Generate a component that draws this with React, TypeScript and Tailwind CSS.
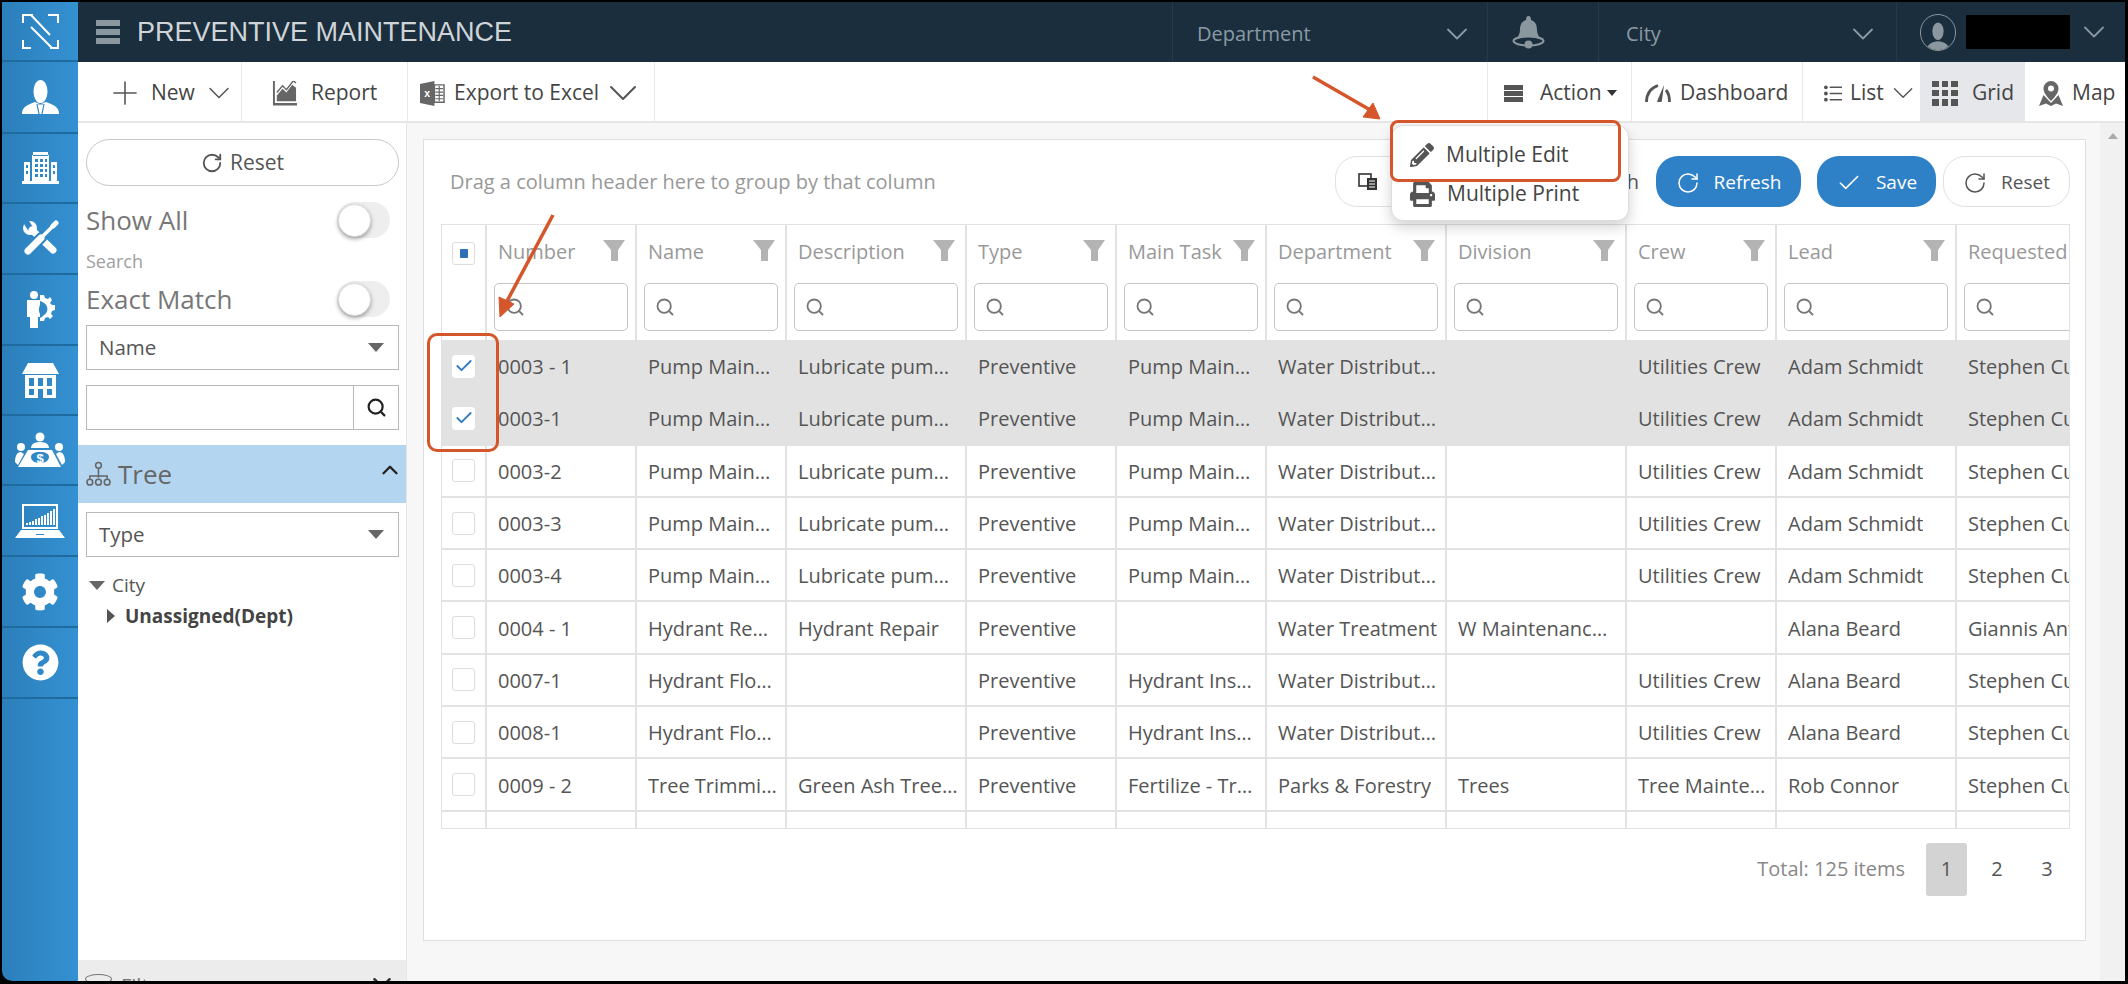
import { Check, ChevronDown, ChevronUp, Plus, RotateCw, Search } from 'lucide-react';
import { FaCog, FaPencilAlt, FaPrint, FaQuestionCircle } from 'react-icons/fa';

const columns = [
  { label: 'Number', width: 'w-[150px]', pad: 'pr-[8px]' },
  { label: 'Name', width: 'w-[150px]', pad: 'pr-[8px]' },
  { label: 'Description', width: 'w-[180px]', pad: 'pr-[6px]' },
  { label: 'Type', width: 'w-[150px]', pad: 'pr-[8px]' },
  { label: 'Main Task', width: 'w-[150px]', pad: 'pr-[8px]' },
  { label: 'Department', width: 'w-[180px]', pad: 'pr-[5px]' },
  { label: 'Division', width: 'w-[180px]', pad: 'pr-[8px]' },
  { label: 'Crew', width: 'w-[150px]', pad: 'pr-[8px]' },
  { label: 'Lead', width: 'w-[180px]', pad: 'pr-[8px]' },
  { label: 'Requested', width: 'w-[180px]', pad: 'pr-[8px]' },
];

const pump = ['Pump Maintenance', 'Lubricate pumps and motors', 'Preventive', 'Pump Maintenance', 'Water Distribution', '', 'Utilities Crew', 'Adam Schmidt', 'Stephen Curry'];
const flush = ['Hydrant Flow Test', '', 'Preventive', 'Hydrant Inspect', 'Water Distribution', '', 'Utilities Crew', 'Alana Beard', 'Stephen Curry'];

const rows = [
  { checked: true, cells: ['0003 - 1', ...pump] },
  { checked: true, cells: ['0003-1', ...pump] },
  { checked: false, cells: ['0003-2', ...pump] },
  { checked: false, cells: ['0003-3', ...pump] },
  { checked: false, cells: ['0003-4', ...pump] },
  { checked: false, cells: ['0004 - 1', 'Hydrant Repair', 'Hydrant Repair', 'Preventive', '', 'Water Treatment', 'W Maintenance Crew', '', 'Alana Beard', 'Giannis Antetokounmpo'] },
  { checked: false, cells: ['0007-1', ...flush] },
  { checked: false, cells: ['0008-1', ...flush] },
  { checked: false, cells: ['0009 - 2', 'Tree Trimming', 'Green Ash Tree Trimming', 'Preventive', 'Fertilize - Tree', 'Parks & Forestry', 'Trees', 'Tree Maintenance', 'Rob Connor', 'Stephen Curry'] },
];

function Logo() {
  return (
    <svg viewBox="0 0 37 35" className="h-[35px] w-[37px]" fill="none" stroke="white" strokeWidth="2">
      <path d="M1 9V1h10M26 1h10v8M1 26v8h8M28 34h8v-8" />
      <path d="M9 1l19 20M9 13l21 21" />
    </svg>
  );
}

function Manager() {
  return (
    <svg viewBox="0 0 37 35" className="h-[35px] w-[37px]" fill="white">
      <ellipse cx="18.500" cy="11.500" rx="7" ry="11.500" />
      <path d="M0 34C0 27 5 25 13 22l5.500 2 5.500-2c8 3 13 5 13 12z" />
      <path d="M15 24l2 10M22 24l-2 10M16 24h5" fill="none" stroke="#2f86c4" strokeWidth="1.200" />
    </svg>
  );
}

function Building() {
  return (
    <svg viewBox="0 0 37 32" className="h-[32px] w-[37px]" fill="white">
      <path fillRule="evenodd" d="M11 0h15v4h-15zM10 3h17v26H10zM13 7v3h3V7zM18 7v3h3V7zM23 7v3h2V7zM13 12v3h3v-3zM18 12v3h3v-3zM23 12v3h2v-3zM13 17v3h3v-3zM18 17v3h3v-3zM23 17v3h2v-3zM13 22v3h3v-3zM18 22v3h3v-3zM23 22v3h2v-3z" />
      <path fillRule="evenodd" d="M2 10h6v19H2zM4 13v3h2v-3zM4 19v3h2v-3zM29 10h6v19h-6zM31 13v3h2v-3zM31 19v3h2v-3z" />
      <rect x="0" y="29" width="37" height="3" />
    </svg>
  );
}

function Tools() {
  return (
    <svg viewBox="0 0 37 37" className="h-[37px] w-[37px]" fill="none" strokeLinecap="round">
      <circle cx="8" cy="8" r="7" fill="white" />
      <path d="M8 8L3 0" stroke="#2f86c4" strokeWidth="6" />
      <path d="M10 10l21 20" stroke="white" strokeWidth="7" />
      <path d="M6 31l14-14" stroke="#2f86c4" strokeWidth="11" />
      <path d="M6 31l13-13" stroke="white" strokeWidth="7" />
      <path d="M19 18l13-13" stroke="white" strokeWidth="3.500" />
      <path d="M31 6l3-3" stroke="white" strokeWidth="5" />
    </svg>
  );
}

function WorkerGear() {
  return (
    <svg viewBox="0 0 30 37" className="h-[37px] w-[30px]" fill="white">
      <circle cx="9" cy="4" r="4" />
      <path d="M2 9h13v5a10 10 0 0 0 0 9v3h-2v11H5V26H2z" />
      <path d="M15 4l4 0 1 3 3 1 2-2 2 3-2 3 2 2 3 0v5l-3 1-1 3 2 2-3 3-2-2-3 1-1 3h-4v-3a11 11 0 0 0 4-3 7 7 0 0 0 0-12 9 9 0 0 0-4-2z" />
    </svg>
  );
}

function Store() {
  return (
    <svg viewBox="0 0 37 35" className="h-[35px] w-[37px]" fill="white">
      <path d="M6 0h25l6 11H0z" />
      <path fillRule="evenodd" d="M3 12h31v23H3zM7 15v8h5v-8zM16 15v8h5v-8zM25 15v8h5v-8zM7 26v6h5v-6zM16 26v9h5v-9zM25 26v6h5v-6z" />
    </svg>
  );
}

function Meeting() {
  return (
    <svg viewBox="0 0 50 36" className="h-[36px] w-[50px]" fill="white">
      <circle cx="25" cy="5" r="4.500" />
      <path d="M16 16c0-4 4-6 9-6s9 2 9 6z" />
      <circle cx="6" cy="15" r="4" />
      <circle cx="44" cy="15" r="4" />
      <path d="M0 30c0-6 2-10 6-10l3 2-6 11zM50 30c0-6-2-10-6-10l-3 2 6 11z" />
      <path fillRule="evenodd" d="M13 18h24l9 17H3zM25 20c-6 0-9 2-9 5s3 6 9 6 9-3 9-6-3-5-9-5z" />
      <text x="25" y="31" fontSize="13" fontWeight="700" textAnchor="middle" fontFamily="Liberation Sans, sans-serif">$</text>
    </svg>
  );
}

function LaptopChart() {
  return (
    <svg viewBox="0 0 50 34" className="h-[34px] w-[50px]" fill="white">
      <path fillRule="evenodd" d="M7 0h36v25H7zM9 2v21h32V2z" />
      <path d="M11 21h2v-2h-2zM14 21h2v-3h-2zM17 21h2v-4h-2zM20 21h2v-6h-2zM23 21h2v-7h-2zM26 21h2v-9h-2zM29 21h2v-10h-2zM32 21h2v-12h-2zM35 21h2v-14h-2zM38 21h2V5h-2z" />
      <path fillRule="evenodd" d="M6 26h38l6 8H0zM21 30v1h8v-1z" />
    </svg>
  );
}

function Bell() {
  return (
    <svg viewBox="0 0 33 33" className="h-[33px] w-[33px]" fill="#8b979f">
      <path d="M16.500 0c2 0 2.500 2 2.500 4 5 1.500 6 6 6 10 0 4 2 7 5 10-4-2-9-3-13.500-3S7 22 3 24c3-3 5-6 5-10 0-4 1-8.500 6-10 0-2 .5-4 2.500-4z" />
      <ellipse cx="16.500" cy="25" rx="15" ry="4.500" fill="none" stroke="#8b979f" strokeWidth="2" />
      <circle cx="16.500" cy="28.500" r="4" />
    </svg>
  );
}

function Gauge() {
  return (
    <svg viewBox="0 0 26 18" className="h-[18px] w-[26px]" fill="none" stroke="#555" strokeWidth="2.800">
      <path d="M1.500 18C1.500 10 6 4 13 1.500" />
      <path d="M21 6c2.500 3 3.500 7 3.500 12" />
      <path d="M12 18l1-3 6-14-2 15-.5 2z" fill="#555" stroke="none" />
    </svg>
  );
}

function Bars({ className }: { className: string }) {
  return (
    <div className={`flex flex-col ${className}`}>
      <div className="flex-1 bg-current" />
      <div className="flex-1 bg-current" />
      <div className="flex-1 bg-current" />
    </div>
  );
}

function ReportIcon() {
  return (
    <svg viewBox="0 0 26 26" className="h-[25px] w-[25px]" fill="#666">
      <path d="M1 0h2v23h23v2.500H1z" />
      <path d="M5 21v-6l6-7 4 4 6-8 4 3v14z" />
      <path d="M5 12l6-7 4 4 7-9 3 2" fill="none" stroke="#666" strokeWidth="1.500" />
    </svg>
  );
}

function ExcelIcon() {
  return (
    <svg viewBox="0 0 26 26" className="h-[25px] w-[25px]">
      <path d="M0 3l15-3v26L0 23z" fill="#666" />
      <path d="M15 4h10v18H15z" fill="white" stroke="#666" strokeWidth="1.500" />
      <path d="M16 8h8M16 11.500h8M16 15h8M16 18.500h8M20 5v16" stroke="#666" strokeWidth="1.200" />
      <text x="7.500" y="17" fontSize="11" fontWeight="700" fill="white" textAnchor="middle" fontFamily="Liberation Sans, sans-serif">x</text>
    </svg>
  );
}

function ListIcon() {
  return (
    <svg viewBox="0 0 19 17" className="h-[17px] w-[19px]" fill="#555">
      <circle cx="2" cy="2" r="2" />
      <circle cx="2" cy="8.500" r="2" />
      <circle cx="2" cy="15" r="2" />
      <path d="M6 1.200h13v1.600H6zM6 7.700h13v1.600H6zM6 14.200h13v1.600H6z" />
    </svg>
  );
}

function MapPinIcon() {
  return (
    <svg viewBox="0 0 24 25" className="h-[25px] w-[24px]" fill="#666">
      <path fillRule="evenodd" d="M12 0a7.500 7.500 0 0 1 7.500 7.500C19.500 12 15 17 12 20 9 17 4.500 12 4.500 7.500A7.500 7.500 0 0 1 12 0zM12 4.500a3 3 0 1 0 0 6 3 3 0 0 0 0-6z" />
      <path d="M4.500 14l7.500 8 7.500-8 4.500 11-7-2.500-5 2.500-5-2.500L0 25z" />
    </svg>
  );
}

function GridIcon() {
  return (
    <div className="grid h-[25px] w-[26px] grid-cols-3 gap-[3px]">
      {Array.from({ length: 9 }).map((_, i) => (
        <div key={i} className="bg-[#555]" />
      ))}
    </div>
  );
}

function TreeIcon() {
  return (
    <svg viewBox="0 0 26 26" className="h-[26px] w-[25px]" fill="none" stroke="#666" strokeWidth="1.600">
      <circle cx="13" cy="4" r="3" />
      <path d="M13 7v10M4 18v-3h18v3" />
      <circle cx="4" cy="21.500" r="3" />
      <circle cx="13" cy="21.500" r="3" />
      <circle cx="22" cy="21.500" r="3" />
    </svg>
  );
}

function FunnelIcon() {
  return (
    <svg viewBox="0 0 22 21" className="mb-[4px] h-[21px] w-[22px]" fill="#b3b3b3">
      <path d="M0 0h22l-7 10v11H8V10z" />
    </svg>
  );
}

function ColumnsIcon() {
  return (
    <svg viewBox="0 0 20 17" className="h-[17px] w-[20px]" fill="none" stroke="#333" strokeWidth="1.600">
      <rect x="1" y="1" width="12" height="12" />
      <rect x="9" y="5" width="10" height="12" fill="#333" stroke="none" />
      <path d="M11 8h6M11 11h6M11 14h6" stroke="white" strokeWidth="1" />
    </svg>
  );
}

function Toggle() {
  return (
    <div className="flex h-[36px] w-[53px] items-center rounded-full bg-[#eeeeee]">
      <div className="ml-[1px] h-[33px] w-[33px] rounded-full border border-[#dddddd] bg-white shadow-[0_2px_4px_rgba(0,0,0,0.35)]" />
    </div>
  );
}

function SelectBox({ label }: { label: string }) {
  return (
    <div className="flex h-[45px] items-center justify-between border border-[#b8b8b8] bg-white pr-[14px] pl-[12px] text-[20.500px] text-[#555]">
      {label}
      <div className="h-0 w-0 border-x-[8px] border-t-[9px] border-x-transparent border-t-[#666]" />
    </div>
  );
}

function SideItem({ children, height }: { children: React.ReactNode; height: string }) {
  return (
    <div className={`flex items-center justify-center border-b-2 border-b-[#1f6a9f] bg-gradient-to-r from-[#2b7fba] to-[#3591d2] ${height}`}>
      {children}
    </div>
  );
}

function ToolbarItem({ children, className = '' }: { children: React.ReactNode; className?: string }) {
  return <div className={`flex h-full items-center border-r border-[#e8e8e8] pt-[3px] ${className}`}>{children}</div>;
}

function App() {
  return (
    <div className="relative flex h-[984px] w-[2128px] overflow-hidden bg-black pt-[2px] pr-[3px] pb-[3px] pl-[2px] font-['Open_Sans','Noto_Sans',sans-serif] text-[20px] text-[#555]">
      <aside className="flex w-[76px] shrink-0 flex-col overflow-hidden rounded-bl-[10px] bg-gradient-to-r from-[#2b7fba] to-[#3591d2]">
        <SideItem height="h-[60px]"><Logo /></SideItem>
        <SideItem height="h-[72px]"><Manager /></SideItem>
        <SideItem height="h-[70px]"><Building /></SideItem>
        <SideItem height="h-[71px]"><Tools /></SideItem>
        <SideItem height="h-[71px]"><WorkerGear /></SideItem>
        <SideItem height="h-[70px]"><Store /></SideItem>
        <SideItem height="h-[70px]"><Meeting /></SideItem>
        <SideItem height="h-[71px]"><LaptopChart /></SideItem>
        <SideItem height="h-[71px]"><FaCog className="text-[38px] text-white" /></SideItem>
        <SideItem height="h-[71px]"><FaQuestionCircle className="text-[37px] text-white" /></SideItem>
      </aside>

      <div className="flex min-w-0 flex-1 flex-col bg-white">
        <header className="flex h-[60px] shrink-0 items-center bg-[#1a2e3d]">
          <Bars className="ml-[18px] h-[24px] w-[24px] gap-[3px] text-[#8b979f]" />
          <div className="ml-[17px] flex-1 font-['Liberation_Sans',sans-serif] text-[27px] text-[#cfd4d8]">PREVENTIVE MAINTENANCE</div>
          <div className="flex h-full w-[316px] items-center justify-between border-x border-[#24394a] pt-[3px] pr-[12px] pl-[24px] text-[20px] text-[#8b9aa5]">
            Department
            <ChevronDown className="h-[36px] w-[36px]" strokeWidth={1.200} />
          </div>
          <div className="flex h-full w-[110px] items-center pl-[24px]">
            <Bell />
          </div>
          <div className="flex h-full w-[299px] items-center justify-between border-x border-[#24394a] pt-[3px] pr-[15px] pl-[27px] text-[20px] text-[#8b9aa5]">
            City
            <ChevronDown className="h-[36px] w-[36px]" strokeWidth={1.200} />
          </div>
          <div className="flex h-full w-[228px] items-center pl-[23px] text-[#8b979f]">
            <div className="flex h-[37px] w-[36px] items-end justify-center overflow-hidden rounded-full border border-[#8b979f]">
              <svg viewBox="0 0 24 24" className="h-[30px] w-[30px]" fill="#8b979f">
                <ellipse cx="12" cy="9" rx="4.500" ry="7" />
                <path d="M3 24c0-4 4-7 9-7s9 3 9 7z" />
              </svg>
            </div>
            <div className="ml-[10px] h-[34px] w-[104px] bg-black" />
            <ChevronDown className="ml-[6px] h-[36px] w-[36px]" strokeWidth={1.200} />
          </div>
        </header>

        <div className="flex h-[61px] shrink-0 items-center border-b-2 border-[#e6e6e6] text-[21px] text-[#444]">
          <ToolbarItem className="w-[164px] pl-[28px]">
            <Plus className="h-[38px] w-[38px] text-[#555]" strokeWidth={1} />
            <span className="ml-[7px]">New</span>
            <ChevronDown className="ml-[6px] h-[36px] w-[36px] text-[#555]" strokeWidth={1} />
          </ToolbarItem>
          <ToolbarItem className="w-[166px] pl-[30px]">
            <ReportIcon />
            <span className="ml-[14px]">Report</span>
          </ToolbarItem>
          <ToolbarItem className="w-[247px] pl-[12px]">
            <ExcelIcon />
            <span className="ml-[9px]">Export to Excel</span>
            <ChevronDown className="h-[48px] w-[48px] text-[#555]" strokeWidth={1} />
          </ToolbarItem>
          <div className="flex-1" />
          <div className="flex h-full w-[144px] items-center border-l border-[#e8e8e8] pt-[3px] pl-[16px]">
            <Bars className="h-[17px] w-[19px] gap-[1px] text-[#555]" />
            <span className="ml-[17px]">Action</span>
            <div className="ml-[5px] h-0 w-0 border-x-[5px] border-t-[6px] border-x-transparent border-t-[#333]" />
          </div>
          <div className="flex h-full w-[171px] items-center border-l border-[#e8e8e8] pt-[3px] pl-[13px]">
            <Gauge />
            <span className="ml-[9px]">Dashboard</span>
          </div>
          <div className="flex h-full w-[118px] items-center border-l border-[#e8e8e8] pt-[3px] pl-[21px]">
            <ListIcon />
            <span className="ml-[8px]">List</span>
            <ChevronDown className="ml-[2px] h-[36px] w-[36px] text-[#555]" strokeWidth={1} />
          </div>
          <div className="flex h-full w-[105px] items-center bg-[#e6e7ea] pt-[3px] pl-[12px]">
            <GridIcon />
            <span className="ml-[14px]">Grid</span>
          </div>
          <div className="flex h-full w-[100px] items-center pt-[3px] pl-[14px]">
            <MapPinIcon />
            <span className="ml-[9px]">Map</span>
          </div>
        </div>

        <div className="flex min-h-0 flex-1">
          <div className="flex w-[329px] shrink-0 flex-col border-r border-[#e6e6e6] pt-[16px]">
            <div className="flex flex-1 flex-col">
              <div className="flex flex-col pr-[7px] pl-[8px]">
                <div className="flex h-[47px] items-center justify-center gap-[7px] rounded-full border border-[#c8c8c8] text-[21px]">
                  <RotateCw className="h-[22px] w-[22px]" strokeWidth={2} />
                  Reset
                </div>
                <div className="mt-[16px] flex h-[36px] items-center justify-between pr-[9px] text-[26px] text-[#777]">
                  Show All
                  <Toggle />
                </div>
                <div className="mt-[10px] text-[18px] leading-[26px] text-[#a0a0a0]">Search</div>
                <div className="mt-[7px] flex h-[36px] items-center justify-between pr-[9px] text-[26px] text-[#777]">
                  Exact Match
                  <Toggle />
                </div>
                <div className="mt-[8px]">
                  <SelectBox label="Name" />
                </div>
                <div className="mt-[15px] flex h-[45px] justify-end border border-[#b8b8b8]">
                  <div className="flex w-[45px] items-center justify-center border-l border-[#b8b8b8]">
                    <Search className="h-[21px] w-[21px] text-[#222]" strokeWidth={2.500} />
                  </div>
                </div>
              </div>
              <div className="mt-[15px] flex h-[58px] items-center justify-between bg-[#b3d5f0] pr-[3px] pl-[8px] text-[26px] text-[#666]">
                <div className="flex items-center gap-[7px]">
                  <TreeIcon />
                  Tree
                </div>
                <ChevronUp className="mb-[8px] h-[26px] w-[26px] text-[#222]" strokeWidth={2.200} />
              </div>
              <div className="mt-[9px] mr-[7px] ml-[8px]">
                <SelectBox label="Type" />
              </div>
              <div className="mt-[16px] flex items-center pl-[11px] text-[19px] leading-[24px] text-[#555]">
                <div className="h-0 w-0 border-x-[8px] border-t-[9px] border-x-transparent border-t-[#666]" />
                <span className="ml-[7px]">City</span>
              </div>
              <div className="mt-[7px] flex items-center pl-[29px] text-[19px] leading-[24px] font-bold text-[#444]">
                <div className="h-0 w-0 border-y-[7px] border-l-[8px] border-y-transparent border-l-[#555]" />
                <span className="ml-[10px]">Unassigned(Dept)</span>
              </div>
            </div>
            <div className="flex h-[21px] items-start justify-between overflow-hidden bg-[#ececec] pt-[14px] pr-[9px] pl-[7px] text-[#777]">
              <div className="flex items-start gap-[9px]">
                <div className="h-[10px] w-[27px] rounded-[50%] border border-[#777]" />
                <span className="mt-[2px] leading-[20px]">Filter</span>
              </div>
              <ChevronDown className="-mt-[6px] h-[30px] w-[30px] text-[#333]" />
            </div>
          </div>

          <main className="flex min-w-0 flex-1 bg-[#f7f7f7] pt-[16px] pb-[40px] pl-[16px]">
            <div className="flex w-[1663px] shrink-0 flex-col border border-[#dfdfe2] bg-white pt-[16px] pr-[15px] pl-[17px]">
              <div className="flex h-[51px] items-center">
                <div className="ml-[9px] flex-1 text-[#999]">Drag a column header here to group by that column</div>
                <div className="flex h-[51px] w-[64px] items-center justify-start rounded-l-[22px] border border-[#e0e0e0] pl-[22px]">
                  <ColumnsIcon />
                </div>
                <div className="mr-[17px] ml-[228px] text-[#555]">h</div>
                <button className="flex h-[51px] w-[145px] items-center justify-center gap-[14px] rounded-[22px] bg-[#2f81c7] pt-[2px] text-[19px] text-white">
                  <RotateCw className="h-[24px] w-[24px]" strokeWidth={1.500} />
                  Refresh
                </button>
                <button className="ml-[16px] flex h-[51px] w-[119px] items-center justify-center gap-[14px] rounded-[22px] bg-[#2f81c7] pt-[2px] text-[19px] text-white">
                  <Check className="h-[26px] w-[26px]" strokeWidth={1.500} />
                  Save
                </button>
                <button className="ml-[7px] flex h-[51px] w-[127px] items-center justify-center gap-[14px] rounded-[22px] border border-[#e0e0e0] pt-[2px] text-[19px] text-[#555]">
                  <RotateCw className="h-[24px] w-[24px]" strokeWidth={1.500} />
                  Reset
                </button>
              </div>

              <div className="mt-[17px] w-[1629px] overflow-hidden border border-[#e2e2e2]">
                <div className="flex h-[116px] border-b border-[#e2e2e2]">
                  <div className="flex w-[45px] shrink-0 justify-center border-r-2 border-[#e2e2e2] pt-[17px]">
                    <div className="flex h-[23px] w-[23px] items-center justify-center rounded-[3px] border border-[#dddddd]">
                      <div className="h-[9px] w-[8px] rounded-[1px] bg-[#2f6fb5]" />
                    </div>
                  </div>
                  {columns.map((col) => (
                    <div key={col.label} className={`flex shrink-0 flex-col border-r-2 border-[#e2e2e2] px-[7px] ${col.width}`}>
                      <div className="flex h-[58px] items-center justify-between pr-[3px] pb-[4px] pl-[4px]">
                        <span className="text-[#999]">{col.label}</span>
                        <FunnelIcon />
                      </div>
                      <div className="flex h-[48px] items-center rounded-[5px] border border-[#c4c4c4] pl-[10px]">
                        <Search className="h-[20px] w-[20px] text-[#777]" strokeWidth={2.200} />
                      </div>
                    </div>
                  ))}
                </div>

                {rows.map((row) => (
                  <div key={row.cells[0]} className={`flex h-[52.300px] border-b-2 border-[#e2e2e2] ${row.checked ? 'bg-[#e2e2e2]' : ''}`}>
                    <div className="flex w-[45px] shrink-0 items-center justify-center border-r-2 border-[#e2e2e2]">
                      <div className={`flex h-[23px] w-[23px] items-center justify-center rounded-[3px] border ${row.checked ? 'border-white bg-white' : 'border-[#dddddd]'}`}>
                        {row.checked && <Check className="h-[20px] w-[20px] text-[#2f7cc4]" strokeWidth={2.200} />}
                      </div>
                    </div>
                    {columns.map((col, i) => (
                      <div key={col.label} className={`flex shrink-0 items-center border-r-2 border-[#e2e2e2] pt-[2px] pl-[11px] ${col.width} ${col.pad}`}>
                        <span className="truncate">{row.cells[i]}</span>
                      </div>
                    ))}
                  </div>
                ))}

                <div className="flex h-[16px]">
                  <div className="w-[45px] shrink-0 border-r-2 border-[#e2e2e2]" />
                  {columns.map((col) => (
                    <div key={col.label} className={`shrink-0 border-r-2 border-[#e2e2e2] ${col.width}`} />
                  ))}
                </div>
              </div>

              <div className="mt-[14px] flex h-[53px] w-[1629px] items-center justify-end pr-[3px] text-[#555]">
                <span className="mr-[21px] text-[#888]">Total: 125 items</span>
                <div className="flex h-[53px] w-[41px] items-center justify-center rounded-[3px] bg-[#d3d3d3]">1</div>
                <div className="flex w-[60px] justify-center">2</div>
                <div className="flex w-[40px] justify-center">3</div>
              </div>
            </div>
            <div className="ml-[15px] flex-1" />
          </main>
          <div className="flex w-[25px] shrink-0 justify-center bg-[#f1f1f1] pt-[10px]">
            <div className="h-0 w-0 border-x-[5px] border-b-[6px] border-x-transparent border-b-[#aaaaaa]" />
          </div>
        </div>
      </div>

      {/* dropdown that lies over the page */}
      <div className="absolute top-[125px] left-[1391px] flex h-[96px] w-[238px] flex-col rounded-[12px] border border-[#dddddd] bg-white pt-[13px] pl-[18px] text-[21px] text-[#444] shadow-[0_6px_14px_rgba(0,0,0,0.18)]">
        <div className="flex h-[32px] items-center gap-[12px]">
          <FaPencilAlt className="text-[24px] text-[#555]" />
          Multiple Edit
        </div>
        <div className="mt-[7px] flex h-[32px] items-center gap-[12px]">
          <FaPrint className="text-[25px] text-[#555]" />
          Multiple Print
        </div>
      </div>

      {/* orange callouts added to the screenshot */}
      <div className="absolute top-[120px] left-[1390px] h-[62px] w-[231px] rounded-[8px] border-[3px] border-[#d4562a]" />
      <div className="absolute top-[333px] left-[427px] h-[119px] w-[72px] rounded-[10px] border-[3px] border-[#d4562a]" />
      <svg className="absolute top-0 left-0 h-[984px] w-[2128px]" viewBox="0 0 2128 984" fill="#d4562a" stroke="#d4562a">
        <path d="M1313 77L1372 111" strokeWidth="3.500" fill="none" />
        <path d="M1380 119L1363 117L1373 103z" />
        <path d="M553 215L506 303" strokeWidth="3.500" fill="none" />
        <path d="M500 317L499 297L514 304z" />
      </svg>
    </div>
  );
}

export default App;
